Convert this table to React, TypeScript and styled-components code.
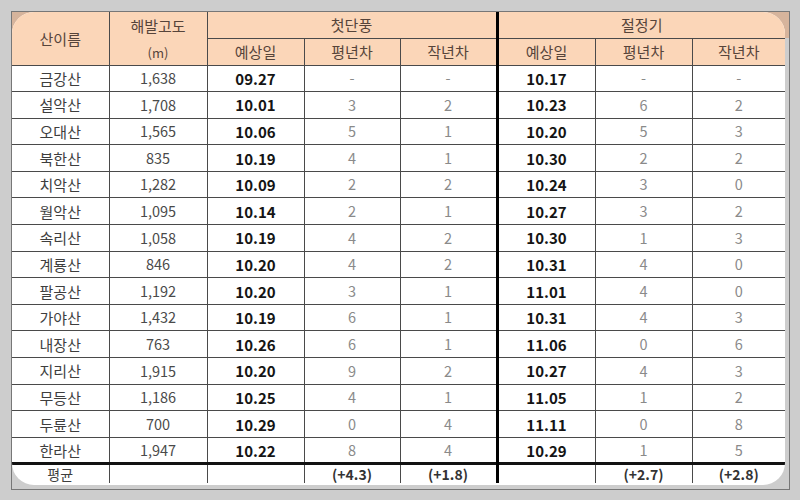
import React from "react";
import styled, { createGlobalStyle } from "styled-components";

const GlobalStyle = createGlobalStyle`
  html, body { margin: 0; padding: 0; background: #cdcdcd; }
  body { font-family: "Noto Sans CJK KR", "Noto Sans", sans-serif; }
`;

const Page = styled.div`
  width: 800px;
  height: 500px;
  padding: 11px 0 0 11px;
  box-sizing: border-box;
`;

const Frame = styled.div`
  width: 779px;
  height: 479px;
  box-sizing: border-box;
  border: 1px solid #777;
  background: linear-gradient(#d6b49c 0 26px, #cdcdcd 26px);
`;

const Wrap = styled.div`
  width: 773px;
  height: 473px;
  border-radius: 22px;
  overflow: hidden;
  background: #fff;
`;

const Table = styled.table`
  width: 773px;
  border-collapse: collapse;
  table-layout: fixed;
  line-height: 1;
`;

const Th = styled.th<{ $thick?: boolean }>`
  background: #fbd6b8;
  color: #56443a;
  font-weight: 400;
  font-size: 15px;
  padding: 0;
  text-align: center;
  border: 1px solid #4a4a4a;
  border-top: none;
  ${(p) => (p.$thick ? "border-left: 3px solid #000;" : "")}
  &:first-child { border-left: none; }
  &:last-child { border-right: none; }
`;

const Stack = styled.div`
  display: flex;
  flex-direction: column;
  align-items: center;
  gap: 13px;
  line-height: 1;
`;

const Small = styled.span`
  font-size: 13px;
`;

const HeadRow = styled.tr<{ $h: number }>`
  height: ${(p) => p.$h}px;
`;

const Row = styled.tr<{ $last?: boolean }>`
  height: ${(p) => (p.$last ? 19 : 26.6)}px;
  ${(p) => (p.$last ? "td { border-top: 3px solid #111; border-bottom: none; font-size: 14px; }" : "")}
`;

type Kind = "name" | "alt" | "date" | "diff" | "avg";

const colors: Record<Kind, string> = {
  name: "#3e3e3e",
  alt: "#4a4a4a",
  date: "#141414",
  diff: "#8a8a8a",
  avg: "#333",
};

const sizes: Record<Kind, string> = {
  name: "15px",
  alt: "14.5px",
  date: "15px",
  diff: "14.5px",
  avg: "14px",
};

const Td = styled.td<{ $kind: Kind; $thick?: boolean }>`
  padding: 0;
  text-align: center;
  color: ${(p) => colors[p.$kind]};
  font-weight: ${(p) => (p.$kind === "date" || p.$kind === "avg" ? 700 : 400)};
  font-size: ${(p) => sizes[p.$kind]};
  border: 1px solid #4a4a4a;
  ${(p) => (p.$thick ? "border-left: 3px solid #000;" : "")}
  &:first-child { border-left: none; }
  &:last-child { border-right: none; }
`;

const rows: [string, string, string, string, string, string, string, string][] = [
  ["금강산", "1,638", "09.27", "-", "-", "10.17", "-", "-"],
  ["설악산", "1,708", "10.01", "3", "2", "10.23", "6", "2"],
  ["오대산", "1,565", "10.06", "5", "1", "10.20", "5", "3"],
  ["북한산", "835", "10.19", "4", "1", "10.30", "2", "2"],
  ["치악산", "1,282", "10.09", "2", "2", "10.24", "3", "0"],
  ["월악산", "1,095", "10.14", "2", "1", "10.27", "3", "2"],
  ["속리산", "1,058", "10.19", "4", "2", "10.30", "1", "3"],
  ["계룡산", "846", "10.20", "4", "2", "10.31", "4", "0"],
  ["팔공산", "1,192", "10.20", "3", "1", "11.01", "4", "0"],
  ["가야산", "1,432", "10.19", "6", "1", "10.31", "4", "3"],
  ["내장산", "763", "10.26", "6", "1", "11.06", "0", "6"],
  ["지리산", "1,915", "10.20", "9", "2", "10.27", "4", "3"],
  ["무등산", "1,186", "10.25", "4", "1", "11.05", "1", "2"],
  ["두륜산", "700", "10.29", "0", "4", "11.11", "0", "8"],
  ["한라산", "1,947", "10.22", "8", "4", "10.29", "1", "5"],
];

const widths = [97, 98, 97, 96, 97, 98, 97, 93];
const kinds: Kind[] = ["name", "alt", "date", "diff", "diff", "date", "diff", "diff"];

export default function App() {
  return (
    <>
      <GlobalStyle />
      <Page>
        <Frame>
          <Wrap>
            <Table>
              <colgroup>
                {widths.map((w, i) => (
                  <col key={i} style={{ width: w }} />
                ))}
              </colgroup>
              <thead>
                <HeadRow $h={26}>
                  <Th rowSpan={2}>산이름</Th>
                  <Th rowSpan={2}>
                    <Stack>
                      <span>해발고도</span>
                      <Small>(m)</Small>
                    </Stack>
                  </Th>
                  <Th colSpan={3}>첫단풍</Th>
                  <Th colSpan={3} $thick>
                    절정기
                  </Th>
                </HeadRow>
                <HeadRow $h={27}>
                  <Th>예상일</Th>
                  <Th>평년차</Th>
                  <Th>작년차</Th>
                  <Th $thick>예상일</Th>
                  <Th>평년차</Th>
                  <Th>작년차</Th>
                </HeadRow>
              </thead>
              <tbody>
                {rows.map((r) => (
                  <Row key={r[0]}>
                    {r.map((v, i) => (
                      <Td key={i} $kind={kinds[i]} $thick={i === 5}>
                        {v}
                      </Td>
                    ))}
                  </Row>
                ))}
                <Row $last>
                  <Td $kind="name">평균</Td>
                  <Td $kind="alt" />
                  <Td $kind="date" />
                  <Td $kind="avg">(+4.3)</Td>
                  <Td $kind="avg">(+1.8)</Td>
                  <Td $kind="date" $thick />
                  <Td $kind="avg">(+2.7)</Td>
                  <Td $kind="avg">(+2.8)</Td>
                </Row>
              </tbody>
            </Table>
          </Wrap>
        </Frame>
      </Page>
    </>
  );
}
